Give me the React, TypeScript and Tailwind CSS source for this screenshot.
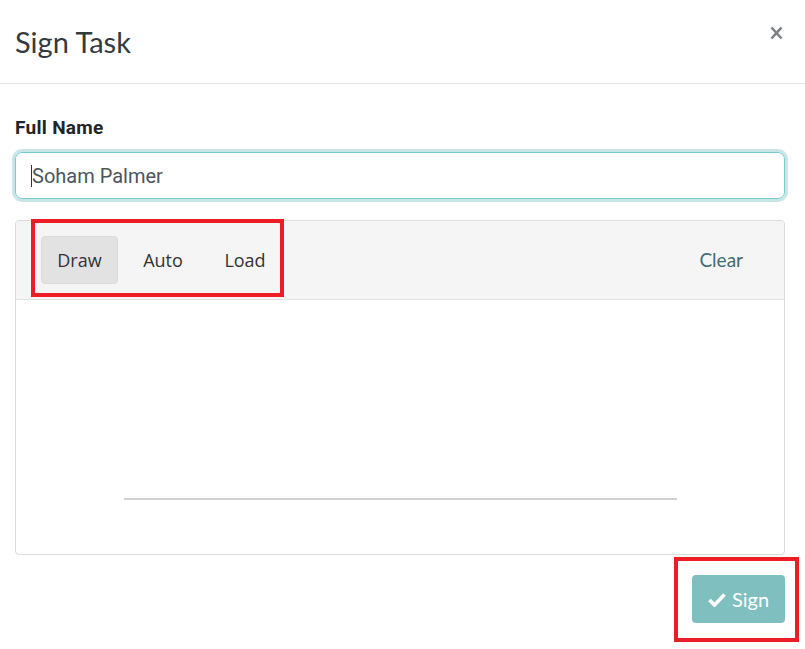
import React from "react";

export default function App() {
  return (
    <div className="relative w-[805px] h-[649px] bg-white overflow-hidden">
      {/* Header */}
      <div className="flex items-center justify-between h-[84px] border-b border-[#e5e5e5] pl-[15px] pr-[22px]">
        <h4 className="text-[29px] text-[#333a40] leading-none pb-[1px]" style={{ fontFamily: "Lato, 'Liberation Sans', sans-serif" }}>
          Sign Task
        </h4>
        <button className="mb-[18px] text-[#777] leading-none">
          <svg width="13" height="14" viewBox="0 0 13 14">
            <path d="M1.5 1.5 L11.5 12.5 M11.5 1.5 L1.5 12.5" stroke="#7b7f83" strokeWidth="2.6" strokeLinecap="butt" />
          </svg>
        </button>
      </div>

      {/* Body */}
      <div className="pl-[15px] pr-[20px] pt-[32px]">
        <label className="block text-[19px] font-bold text-[#212529] leading-[24px] tracking-[0.3px]" style={{ fontFamily: "Roboto, 'Liberation Sans', sans-serif" }}>
          Full Name
        </label>
        <div className="mt-[12px] h-[47px] rounded-[7px] border border-[#79cbd1] shadow-[0_0_0_3px_#c9e6e7] flex items-center pl-[15px]">
          <span className="w-[1px] h-[22px] bg-[#333]" />
          <span className="text-[20px] text-[#4b5560]" style={{ fontFamily: "Roboto, 'Liberation Sans', sans-serif" }}>
            Soham Palmer
          </span>
        </div>

        {/* Signature pad */}
        <div className="mt-[21px] h-[335px] rounded-[4px] border border-[#dcdcdc] flex flex-col overflow-hidden">
          <div className="h-[79px] bg-[#f5f5f5] border-b border-[#e2e2e2] flex items-center pl-[25px] pr-[41px]" style={{ fontFamily: "'Open Sans', 'Noto Sans', sans-serif" }}>
            <button className="w-[77px] h-[48px] rounded-[4px] bg-[#e2e2e2] border border-[#dadada] text-[18px] text-[#333]">
              Draw
            </button>
            <button className="ml-[10px] w-[70px] h-[48px] text-[18px] text-[#333]">Auto</button>
            <button className="ml-[14px] w-[66px] h-[48px] text-[18px] text-[#333]">Load</button>
            <div className="flex-1" />
            <button className="text-[19px] text-[#3f6c73]" style={{ fontFamily: "Lato, 'Liberation Sans', sans-serif" }}>
              Clear
            </button>
          </div>
          <div className="flex-1 flex flex-col items-center">
            <div className="mt-[198px] w-[553px] h-[2px] bg-[#d2d2d2]" />
          </div>
        </div>

        {/* Footer */}
        <div className="flex justify-end mt-[20px]">
          <button className="w-[93px] h-[48px] rounded-[4px] bg-[#7fbfbf] text-white text-[20px] flex items-center justify-center gap-[6px]" style={{ fontFamily: "Lato, 'Liberation Sans', sans-serif" }}>
            <svg width="18" height="15" viewBox="0 0 18 15">
              <path d="M1.5 8 L6.5 13 L16.5 2.5" stroke="white" strokeWidth="3.6" fill="none" strokeLinejoin="miter" />
            </svg>
            Sign
          </button>
        </div>
      </div>

      {/* Annotation boxes */}
      <div className="absolute left-[31px] top-[219px] w-[253px] h-[78px] border-[4px] border-[#ee1c25] pointer-events-none" />
      <div className="absolute left-[674px] top-[557px] w-[125px] h-[85px] border-[4px] border-[#ee1c25] pointer-events-none" />
    </div>
  );
}
